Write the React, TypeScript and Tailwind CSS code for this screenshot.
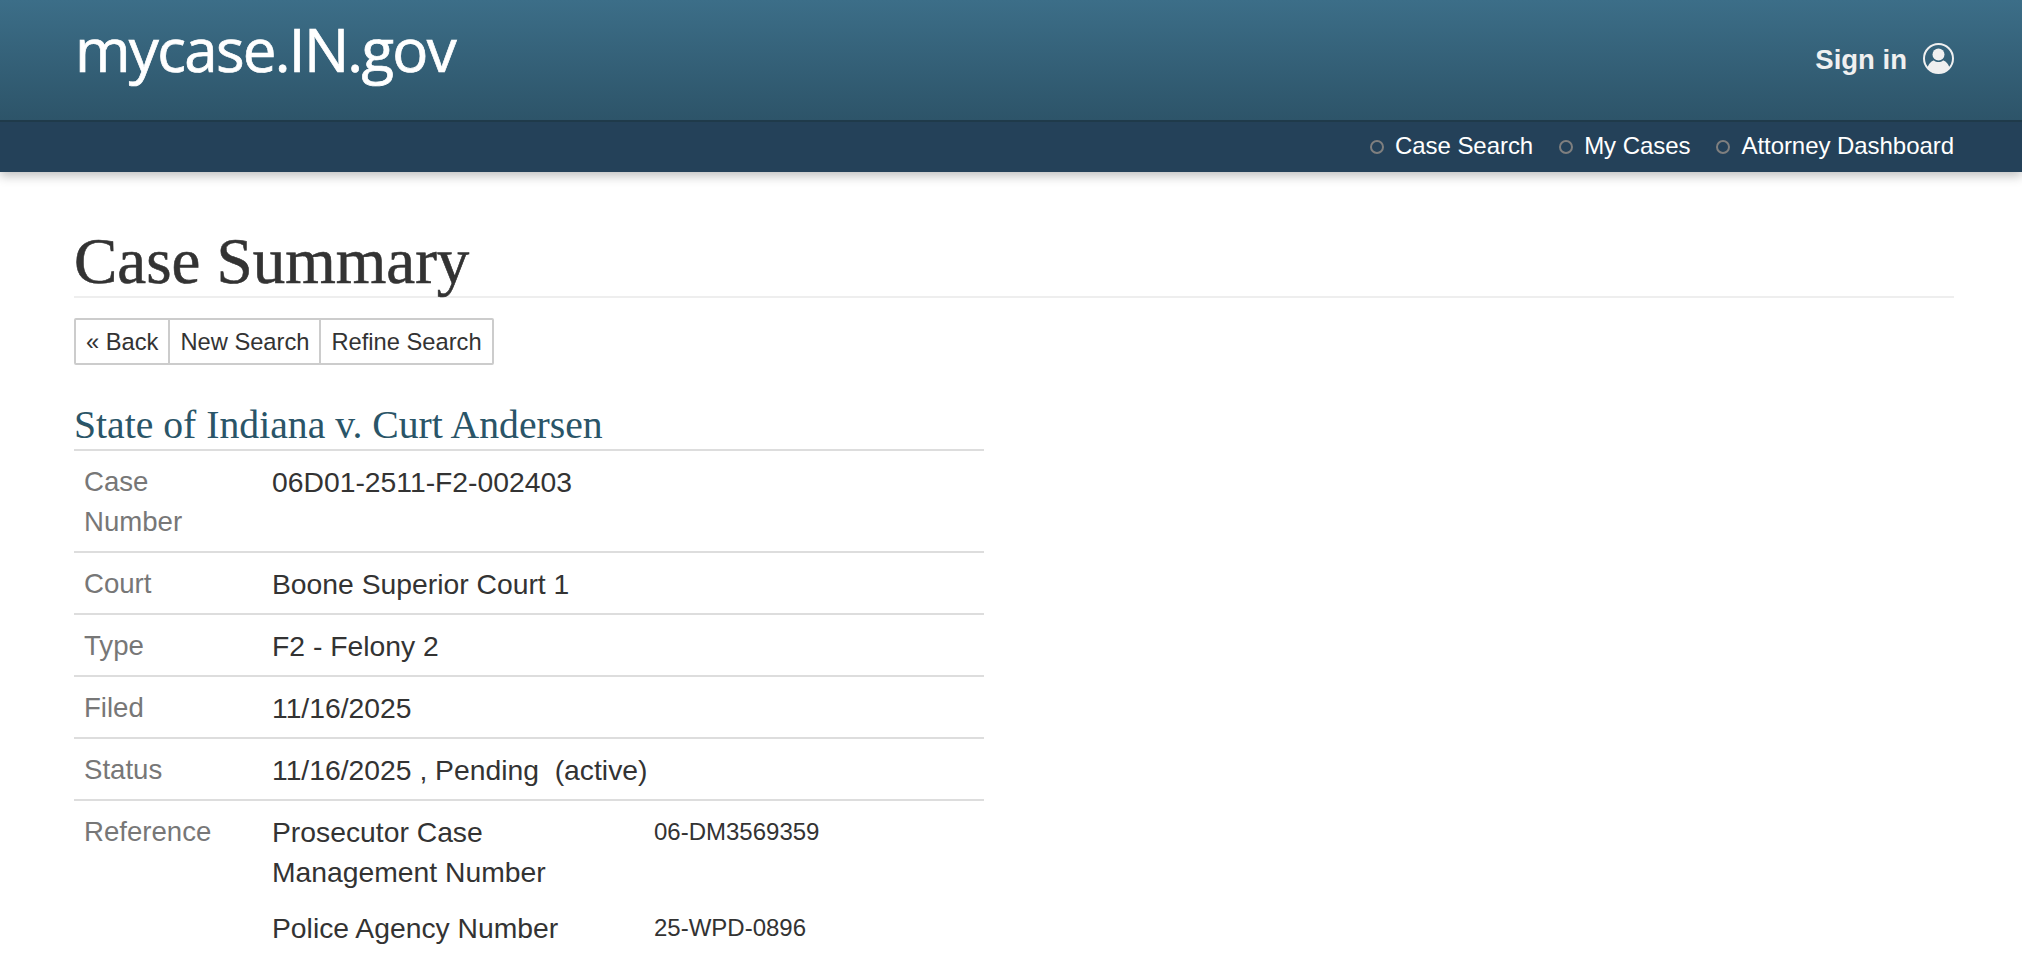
const sans = "font-['Liberation_Sans',Arial,sans-serif]";

const NavLink = ({ label }: { label: string }) => (
  <a className="flex items-center gap-[11px] text-white">
    <span className="mt-[2px] h-[14px] w-[14px] rounded-full border-2 border-[#7f7f7f]" />
    {label}
  </a>
);

const Row = ({ label, children }: { label: string; children: React.ReactNode }) => (
  <div className="flex border-b-2 border-[#dddddd] px-[10px] pb-[9px] pt-[11px] leading-[40px] last:border-b-0">
    <div className="w-[188px] shrink-0 pr-[30px] text-[27.6px] text-[#777777]">{label}</div>
    <div className="flex-1 text-[#333333]">{children}</div>
  </div>
);

export default function App() {
  return (
    <div className={`min-h-[978px] overflow-hidden bg-white ${sans}`}>
      <header className="shadow-[0_4px_10px_rgba(0,0,0,0.25)]">
        <div className="flex h-[120px] items-start justify-between bg-gradient-to-b from-[#3c6e88] to-[#2d5469] pl-[75px] pr-[68px]">
          <div className="mt-[9px] font-['Open_Sans',sans-serif] text-[60px] font-medium leading-[80px] tracking-[-1.7px] text-white blur-[0.5px] [-webkit-text-stroke:0.7px_#ffffff]">
            mycase.IN.gov
          </div>
          <div className="mt-[44px] flex items-center gap-[16px] text-[27.5px] font-bold leading-[32px] text-[#f0f0f0]">
            Sign in
            <svg width="31" height="31" viewBox="0 0 31 31" fill="none" className="-mt-[3px]">
              <circle cx="15.5" cy="15.5" r="14.5" stroke="#f0f0f0" strokeWidth="2" />
              <circle cx="15.5" cy="11.5" r="6" fill="#f0f0f0" />
              <path d="M4.500 25c1-5 5-7.500 6.500-7.500 1.200 1 2.700 1.500 4.500 1.500s3.300-.5 4.500-1.500c1.500 0 5.500 2.500 6.500 7.500-2.800 3-6.500 4.500-11 4.500s-8.200-1.500-10.500-4.500z" fill="#f0f0f0" />
            </svg>
          </div>
        </div>
        <nav className="flex h-[52px] items-center justify-end gap-[26px] border-t-2 border-[#1f3a4a] bg-[#244159] pb-[2px] pr-[68px] text-[24px] tracking-[-0.05px]">
          <NavLink label="Case Search" />
          <NavLink label="My Cases" />
          <NavLink label="Attorney Dashboard" />
        </nav>
      </header>

      <main className="pl-[74px] pr-[68px]">
        <h1 className="mt-[54px] border-b-2 border-[#eeeeee] font-['Liberation_Serif',Georgia,serif] text-[65px] leading-[70px] text-[#333333] [-webkit-text-stroke:0.6px_#333333]">
          Case Summary
        </h1>

        <div className="mt-[20px] flex h-[47px] w-fit rounded-[2px] border-2 border-[#cccccc] text-[23.7px] leading-[44px] text-[#333333]">
          <a className="px-[10px]">« Back</a>
          <a className="border-l-2 border-[#cccccc] px-[10px]">New Search</a>
          <a className="border-l-2 border-[#cccccc] px-[10px]">Refine Search</a>
        </div>

        <h2 className="mt-[36px] font-['Liberation_Serif',Georgia,serif] text-[39.700px] leading-[48px] text-[#2a5568]">
          State of Indiana v. Curt Andersen
        </h2>

        <div className="w-[910px] border-t-2 border-[#dddddd] text-[28.3px]">
          <Row label="Case Number">06D01-2511-F2-002403</Row>
          <Row label="Court">Boone Superior Court 1</Row>
          <Row label="Type">F2 - Felony 2</Row>
          <Row label="Filed">11/16/2025</Row>
          <Row label="Status">11/16/2025 , Pending&nbsp; (active)</Row>
          <Row label="Reference">
            <div className="flex">
              <div className="w-[382px] shrink-0">Prosecutor Case<br />Management Number</div>
              <div className="text-[24px]">06-DM3569359</div>
            </div>
            <div className="mt-[16px] flex">
              <div className="w-[382px] shrink-0">Police Agency Number</div>
              <div className="text-[24px]">25-WPD-0896</div>
            </div>
          </Row>
        </div>
      </main>
    </div>
  );
}
